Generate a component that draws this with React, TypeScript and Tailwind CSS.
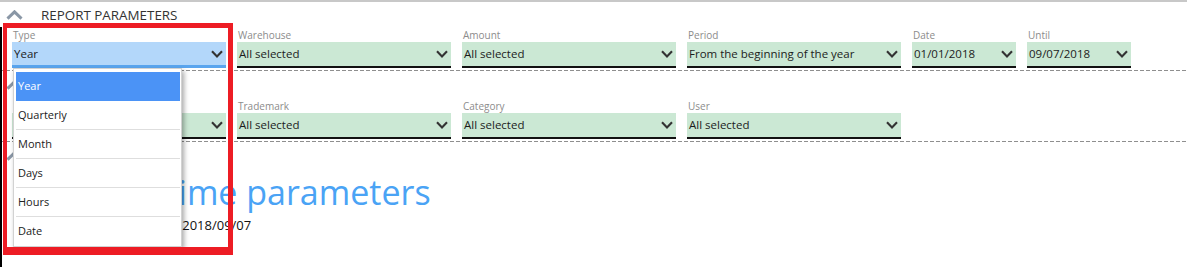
import React from 'react';
import clsx from 'clsx';

function DownChevron() {
    return (
        <svg width="12" height="8" viewBox="0 0 12 8" className="shrink-0">
            <path d="M1 1.3 L6 6.4 L11 1.3" fill="none" stroke="#333" strokeWidth="2.1" />
        </svg>
    );
}

function UpChevron() {
    return (
        <svg width="17" height="10" viewBox="0 0 17 10" className="shrink-0">
            <path d="M1.5 8.6 L8.5 1.8 L15.5 8.6" fill="none" stroke="#8a97a6" strokeWidth="3" />
        </svg>
    );
}

function SectionHeader({ title, height }: { title?: string; height: string }) {
    return (
        <div className={clsx('flex items-center', height)}>
            <span className="ml-[6px] flex w-[17px]"><UpChevron /></span>
            {title && <span className="ml-[18px] text-[13.4px] text-[#333]">{title}</span>}
        </div>
    );
}

function Field({ label, value, wide = true, active = false }: { label?: string; value?: string; wide?: boolean; active?: boolean }) {
    return (
        <div className={wide ? 'w-[214px]' : 'w-[104px]'}>
            <div className="h-[14px] pl-[1px] text-[10px] leading-[14px] text-[#8c8c8c]">{label}</div>
            <div
                className={clsx(
                    'flex h-[26px] items-center justify-between pl-[2px] pr-[3px] text-[11.5px] text-[#1c1c1c]',
                    active ? 'border-b-[3px] border-[#5aa5ee] bg-[#b3d7fa]' : 'border-b-2 border-[#111] bg-[#cbe8d4]'
                )}
            >
                <span className="whitespace-nowrap">{value}</span>
                <DownChevron />
            </div>
        </div>
    );
}

function Dashed() {
    return <div className="h-px bg-[repeating-linear-gradient(to_right,#8f8f8f_0_4px,transparent_4px_6px)]" />;
}

const TYPES = ['Year', 'Quarterly', 'Month', 'Days', 'Hours', 'Date'];

export default function App() {
    return (
        <div className="relative h-[267px] w-[1187px] overflow-hidden bg-white font-['Open_Sans',sans-serif]">
            <div className="h-[2px] bg-[#c8c8c8]" />
            <SectionHeader title="REPORT PARAMETERS" height="h-[26px]" />

            <div className="flex gap-[11px] pl-[12px]">
                <Field label="Type" value="Year" active />
                <Field label="Warehouse" value="All selected" />
                <Field label="Amount" value="All selected" />
                <Field label="Period" value="From the beginning of the year" />
                <Field label="Date" value="01/01/2018" wide={false} />
                <Field label="Until" value="09/07/2018" wide={false} />
            </div>
            <div className="mt-[2px]"><Dashed /></div>

            <SectionHeader height="h-[28px]" />
            <div className="flex gap-[11px] pl-[12px]">
                <Field />
                <Field label="Trademark" value="All selected" />
                <Field label="Category" value="All selected" />
                <Field label="User" value="All selected" />
            </div>
            <div className="mt-[2px]"><Dashed /></div>

            <SectionHeader height="h-[28px]" />
            <div className="whitespace-nowrap">
                <div className="mt-[2px] pl-[50px] text-[34px] leading-[40px] text-[#4aa3f5]">Report time parameters</div>
                <div className="mt-[4px] pl-[56px] text-[13px] leading-[18px] text-[#111]">Period: 2018/01/01 - 2018/09/07</div>
            </div>

            {/* open Type list */}
            <div className="absolute left-[13px] top-[68px] h-[179px] w-[169px] border border-[#d2d2d2] bg-white pl-[2px] pr-[1px] pt-[3px] shadow-[2px_3px_5px_rgba(0,0,0,0.35)]">
                {TYPES.map((t, i) => (
                    <div
                        key={t}
                        className={clsx(
                            'flex h-[29px] items-center pl-[2px] text-[11px]',
                            i === 0 ? 'bg-[#4b93f6] text-white' : 'text-[#222]',
                            i > 0 && i < TYPES.length - 1 && 'border-b border-[#dedede]'
                        )}
                    >
                        {t}
                    </div>
                ))}
            </div>

            {/* annotation frame */}
            <div className="pointer-events-none absolute left-[3px] top-[23px] h-[232px] w-[230px] border-[#ed1c24] border-b-[8px] border-l-[4px] border-r-[5px] border-t-[5px]" />
            <div className="absolute bottom-0 left-0 top-[27px] w-[2px] bg-black" />
        </div>
    );
}
